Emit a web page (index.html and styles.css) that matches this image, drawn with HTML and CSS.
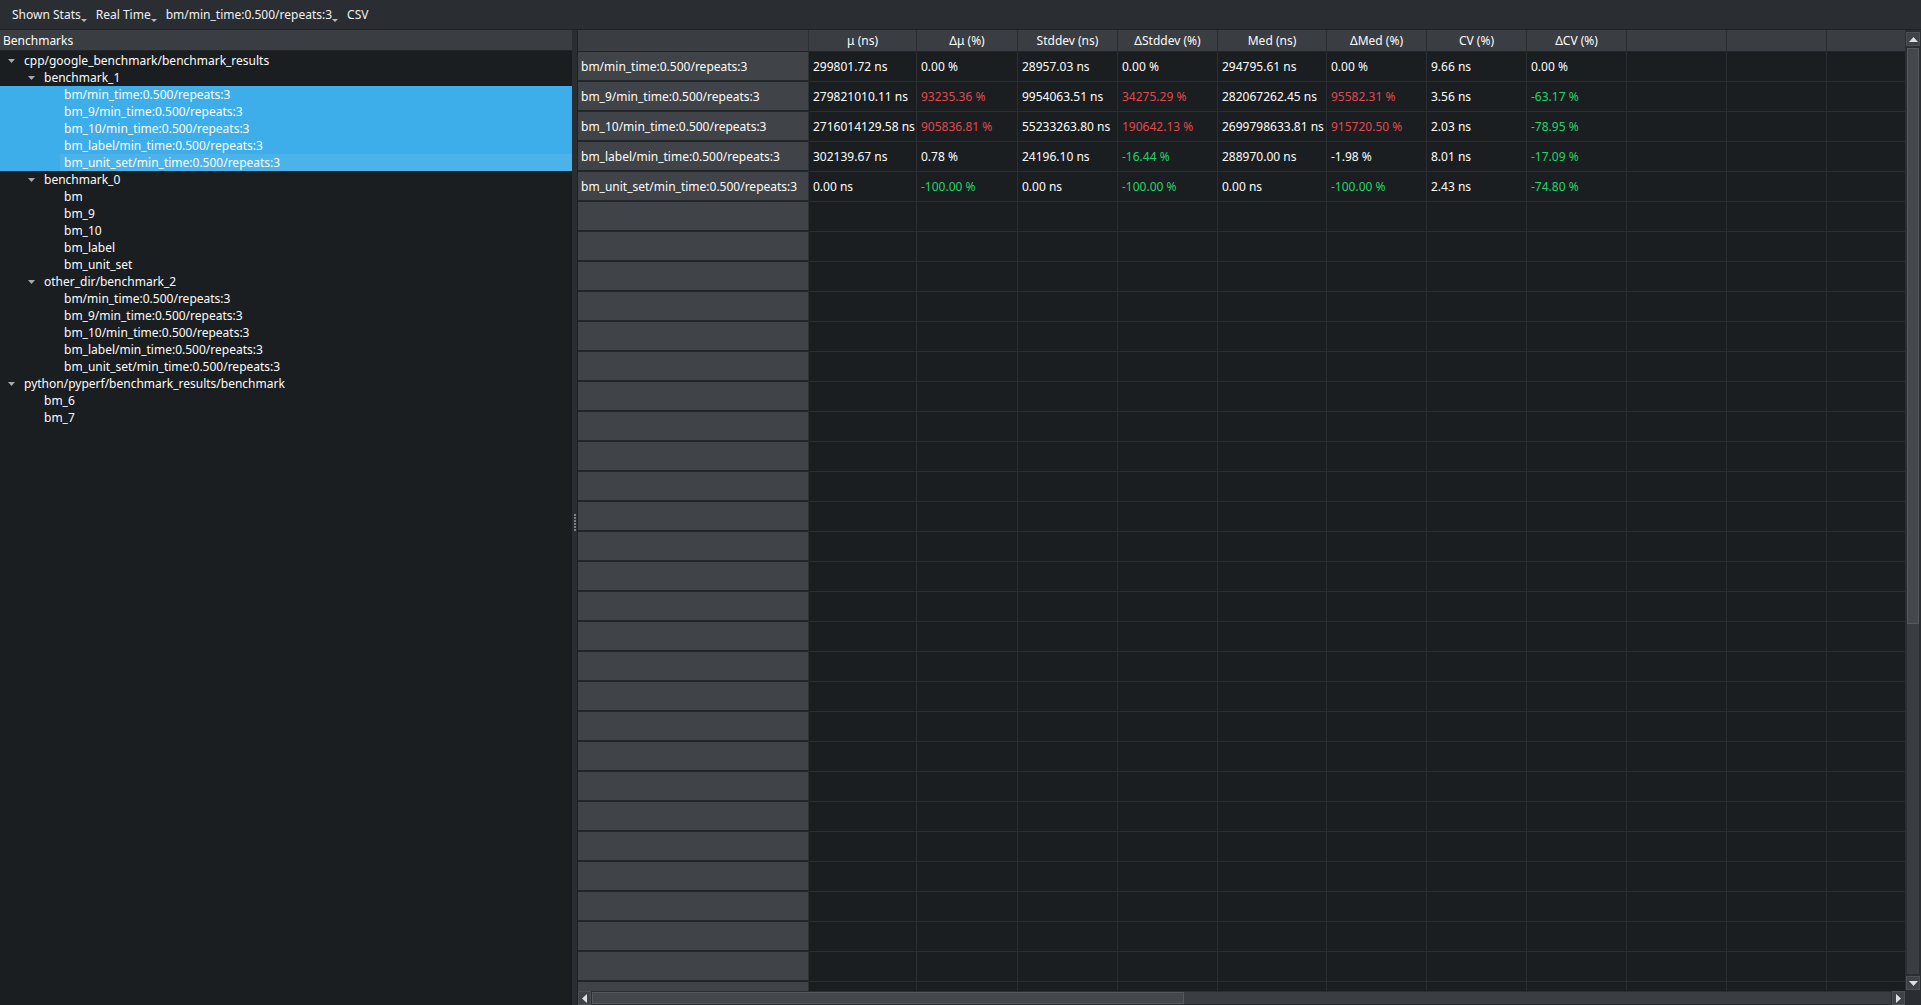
FILE: index.html
```html
<!DOCTYPE html>
<html>
<head>
<meta charset="utf-8">
<title>Benchmarks</title>
<link rel="stylesheet" href="styles.css">
</head>
<body>
<div class="app">
  <div class="menubar">
    <div class="menu">Shown Stats<svg class="ind" width="6" height="4" viewBox="0 0 6 4"><path d="M0 0H6L3 3Z" fill="#b9bbbe"/></svg></div>
    <div class="menu">Real Time<svg class="ind" width="6" height="4" viewBox="0 0 6 4"><path d="M0 0H6L3 3Z" fill="#b9bbbe"/></svg></div>
    <div class="menu">bm/min_time:0.500/repeats:3<svg class="ind" width="6" height="4" viewBox="0 0 6 4"><path d="M0 0H6L3 3Z" fill="#b9bbbe"/></svg></div>
    <div class="menu">CSV</div>
  </div>
  <div class="main">
    <div class="left">
      <div class="tree-header">Benchmarks</div>
      <div class="tree">
        <div class="node l0"><svg class="arrow" width="7" height="4" viewBox="0 0 7 4"><path d="M0 0H7L3.5 4Z" fill="#a7aaad"/></svg>cpp/google_benchmark/benchmark_results</div>
        <div class="node l1"><svg class="arrow" width="7" height="4" viewBox="0 0 7 4"><path d="M0 0H7L3.5 4Z" fill="#a7aaad"/></svg>benchmark_1</div>
        <div class="node l2 sel">bm/min_time:0.500/repeats:3</div>
        <div class="node l2 sel">bm_9/min_time:0.500/repeats:3</div>
        <div class="node l2 sel">bm_10/min_time:0.500/repeats:3</div>
        <div class="node l2 sel">bm_label/min_time:0.500/repeats:3</div>
        <div class="node l2 sel cur"><span class="cur-fill">bm_unit_set/min_time:0.500/repeats:3</span></div>
        <div class="node l1"><svg class="arrow" width="7" height="4" viewBox="0 0 7 4"><path d="M0 0H7L3.5 4Z" fill="#a7aaad"/></svg>benchmark_0</div>
        <div class="node l2">bm</div>
        <div class="node l2">bm_9</div>
        <div class="node l2">bm_10</div>
        <div class="node l2">bm_label</div>
        <div class="node l2">bm_unit_set</div>
        <div class="node l1"><svg class="arrow" width="7" height="4" viewBox="0 0 7 4"><path d="M0 0H7L3.5 4Z" fill="#a7aaad"/></svg>other_dir/benchmark_2</div>
        <div class="node l2">bm/min_time:0.500/repeats:3</div>
        <div class="node l2">bm_9/min_time:0.500/repeats:3</div>
        <div class="node l2">bm_10/min_time:0.500/repeats:3</div>
        <div class="node l2">bm_label/min_time:0.500/repeats:3</div>
        <div class="node l2">bm_unit_set/min_time:0.500/repeats:3</div>
        <div class="node l0"><svg class="arrow" width="7" height="4" viewBox="0 0 7 4"><path d="M0 0H7L3.5 4Z" fill="#a7aaad"/></svg>python/pyperf/benchmark_results/benchmark</div>
        <div class="node l1">bm_6</div>
        <div class="node l1">bm_7</div>
      </div>
    </div>
    <div class="splitter"><div class="grip"><i></i><i></i><i></i><i></i><i></i><i></i></div></div>
    <div class="right">
      <div class="view">
        <div class="table" id="table">
          <div class="corner"></div>
          <div class="h">μ (ns)</div>
          <div class="h">Δμ (%)</div>
          <div class="h">Stddev (ns)</div>
          <div class="h">ΔStddev (%)</div>
          <div class="h">Med (ns)</div>
          <div class="h">ΔMed (%)</div>
          <div class="h">CV (%)</div>
          <div class="h">ΔCV (%)</div>
          <div class="h"></div>
          <div class="h"></div>
          <div class="h"></div>

          <div class="vh">bm/min_time:0.500/repeats:3</div>
          <div class="c">299801.72 ns</div>
          <div class="c">0.00 %</div>
          <div class="c">28957.03 ns</div>
          <div class="c">0.00 %</div>
          <div class="c">294795.61 ns</div>
          <div class="c">0.00 %</div>
          <div class="c">9.66 ns</div>
          <div class="c">0.00 %</div>
          <div class="c"></div><div class="c"></div><div class="c"></div>

          <div class="vh">bm_9/min_time:0.500/repeats:3</div>
          <div class="c">279821010.11 ns</div>
          <div class="c neg">93235.36 %</div>
          <div class="c">9954063.51 ns</div>
          <div class="c neg">34275.29 %</div>
          <div class="c">282067262.45 ns</div>
          <div class="c neg">95582.31 %</div>
          <div class="c">3.56 ns</div>
          <div class="c pos">-63.17 %</div>
          <div class="c"></div><div class="c"></div><div class="c"></div>

          <div class="vh">bm_10/min_time:0.500/repeats:3</div>
          <div class="c">2716014129.58 ns</div>
          <div class="c neg">905836.81 %</div>
          <div class="c">55233263.80 ns</div>
          <div class="c neg">190642.13 %</div>
          <div class="c">2699798633.81 ns</div>
          <div class="c neg">915720.50 %</div>
          <div class="c">2.03 ns</div>
          <div class="c pos">-78.95 %</div>
          <div class="c"></div><div class="c"></div><div class="c"></div>

          <div class="vh">bm_label/min_time:0.500/repeats:3</div>
          <div class="c">302139.67 ns</div>
          <div class="c">0.78 %</div>
          <div class="c">24196.10 ns</div>
          <div class="c pos">-16.44 %</div>
          <div class="c">288970.00 ns</div>
          <div class="c">-1.98 %</div>
          <div class="c">8.01 ns</div>
          <div class="c pos">-17.09 %</div>
          <div class="c"></div><div class="c"></div><div class="c"></div>

          <div class="vh">bm_unit_set/min_time:0.500/repeats:3</div>
          <div class="c">0.00 ns</div>
          <div class="c pos">-100.00 %</div>
          <div class="c">0.00 ns</div>
          <div class="c pos">-100.00 %</div>
          <div class="c">0.00 ns</div>
          <div class="c pos">-100.00 %</div>
          <div class="c">2.43 ns</div>
          <div class="c pos">-74.80 %</div>
          <div class="c"></div><div class="c"></div><div class="c"></div>
        </div>
        <div class="vscroll">
          <div class="sbtn up"><svg width="9" height="5" viewBox="0 0 9 5"><path d="M0 5H9L4.5 0Z" fill="#dfe0e1"/></svg></div>
          <div class="vtrack"><div class="vhandle"></div></div>
          <div class="sbtn down"><svg width="9" height="5" viewBox="0 0 9 5"><path d="M0 0H9L4.5 5Z" fill="#dfe0e1"/></svg></div>
        </div>
      </div>
      <div class="hscroll">
        <div class="hbtn"><svg width="5" height="9" viewBox="0 0 5 9"><path d="M5 0V9L0 4.5Z" fill="#dfe0e1"/></svg></div>
        <div class="htrack"><div class="hhandle"></div></div>
        <div class="hbtn"><svg width="5" height="9" viewBox="0 0 5 9"><path d="M0 0V9L5 4.5Z" fill="#dfe0e1"/></svg></div>
        <div class="hcorner"></div>
      </div>
    </div>
  </div>
</div>
<script src="table.js"></script>
</body>
</html>
```

FILE: styles.css
```css
* { box-sizing: border-box; }
html, body { margin: 0; padding: 0; }
body {
  background: #2a2e32;
  color: #fcfcfc;
  font-family: "Noto Sans", "DejaVu Sans", sans-serif;
  font-size: 12px;
  overflow: hidden;
}
.app {
  width: 1921px;
  height: 1005px;
  display: flex;
  flex-direction: column;
}
.menubar {
  height: 30px;
  flex: none;
  display: flex;
  align-items: center;
  padding-left: 7px;
  padding-top: 1px;
  background: #2a2e32;
  border-bottom: 1px solid #1f2225;
}
.menu {
  padding: 0 4px 0 5px;
  line-height: 28px;
  white-space: nowrap;
  color: #eff0f1;
}
.ind { vertical-align: -4px; margin-left: 0; }

.main {
  flex: 1;
  display: flex;
  min-height: 0;
}
.left {
  width: 572px;
  flex: none;
  background: #1b1e20;
  display: flex;
  flex-direction: column;
}
.tree-header {
  height: 21px;
  line-height: 20px;
  padding-left: 3px;
  padding-top: 1px;
  background: #3a3d41;
  border-bottom: 1px solid #232629;
}
.tree { padding-top: 1px; }
.node {
  height: 17px;
  line-height: 17px;
  white-space: nowrap;
  position: relative;
}
.node.l0 { padding-left: 24px; }
.node.l1 { padding-left: 44px; }
.node.l2 { padding-left: 64px; }
.arrow {
  position: absolute;
  top: 7px;
  margin-left: -16px;
}
.node.sel { background: #3daee9; color: #fcfcfc; }
.node.cur { padding-left: 60px; }
.cur-fill {
  display: block;
  padding-left: 4px;
  background: #4bb3ea;
}

.splitter {
  width: 6px;
  flex: none;
  background: #2a2e32;
  border-right: 1px solid #1f2225;
  display: flex;
  align-items: center;
  justify-content: center;
}
.grip {
  display: flex;
  flex-direction: column;
  gap: 1px;
  margin-top: 10px;
}
.grip i {
  display: block;
  width: 2px;
  height: 2px;
  background: #7d8084;
}

.right {
  flex: 1;
  min-width: 0;
  display: flex;
  flex-direction: column;
}
.view {
  flex: 1;
  min-height: 0;
  display: flex;
}
.table {
  flex: 1;
  min-width: 0;
  overflow: hidden;
  display: grid;
  grid-template-columns: 231px 108px 101px 100px 100px 109px 100px 100px 100px 100px 100px 100px;
  grid-template-rows: 22px;
  grid-auto-rows: 30px;
  align-content: start;
  background: #1b1e20;
}
.corner {
  background: #3a3d41;
  border-bottom: 1px solid #232629;
  border-right: 1px solid #2d3034;
}
.h {
  background: #3a3d41;
  border-right: 1px solid #2a2d31;
  border-bottom: 1px solid #232629;
  text-align: center;
  line-height: 21px;
  white-space: nowrap;
  overflow: hidden;
}
.vh {
  background: #404347;
  border-bottom: 2px solid #232629;
  border-right: 1px solid #2d3034;
  padding-left: 3px;
  display: flex;
  align-items: center;
  white-space: nowrap;
  overflow: hidden;
}
.c {
  border-right: 1px solid #2a2d31;
  border-bottom: 1px solid #2a2d31;
  padding-left: 4px;
  display: flex;
  align-items: center;
  white-space: nowrap;
  overflow: hidden;
}
.neg { color: #e0474f; }
.pos { color: #22d46a; }

.vscroll {
  width: 16px;
  flex: none;
  display: flex;
  flex-direction: column;
  background: #2a2e32;
  padding: 2px 1px 1px 1px;
}
.sbtn {
  height: 14px;
  flex: none;
  background: #3f4246;
  border: 1px solid #4d5054;
  display: flex;
  align-items: center;
  justify-content: center;
}
.vtrack {
  flex: 1;
  background: #3a3d41;
  border: 1px solid #2a2d31;
  margin: 1px 0;
}
.vhandle {
  height: 576px;
  background: #44474b;
  border: 1px solid #55585c;
}

.hscroll {
  height: 14px;
  flex: none;
  display: flex;
  background: #2a2e32;
}
.hbtn {
  width: 13px;
  flex: none;
  background: #3f4246;
  border: 1px solid #4d5054;
  display: flex;
  align-items: center;
  justify-content: center;
}
.htrack {
  flex: 1;
  background: #3a3d41;
  border: 1px solid #2a2d31;
}
.hhandle {
  width: 592px;
  height: 100%;
  background: #44474b;
  border: 1px solid #55585c;
}
.hcorner {
  width: 16px;
  flex: none;
  background: #2a2e32;
}
```

FILE: table.js
```js
(function () {
  var t = document.getElementById('table');
  for (var r = 0; r < 28; r++) {
    var v = document.createElement('div');
    v.className = 'vh';
    t.appendChild(v);
    for (var c = 0; c < 11; c++) {
      var d = document.createElement('div');
      d.className = 'c';
      t.appendChild(d);
    }
  }
})();
```
